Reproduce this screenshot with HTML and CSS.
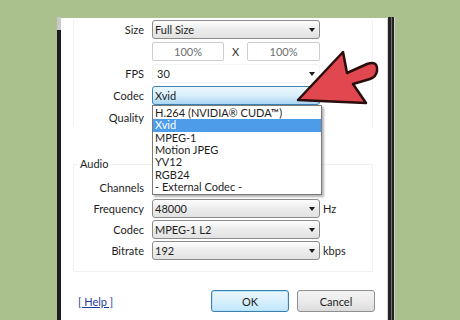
FILE: index.html
```html
<!DOCTYPE html>
<html>
<head>
  <meta charset="utf-8" />
  <title>Export Settings</title>
  <link rel="stylesheet" href="styles.css">
</head>
<body>

  <div class="frame">
    <div class="edge-left"></div>

    <div class="dialog">
      <!-- Video settings -->
      <div class="group video">
        <div class="row">
          <span class="lbl">Size</span>
          <div class="ctl select"><span>Full Size</span><i class="caret"></i></div>
        </div>
        <div class="row">
          <span class="lbl"></span>
          <div class="ctl pct">
            <span class="pct-box">100%</span>
            <span class="times">X</span>
            <span class="pct-box">100%</span>
          </div>
        </div>
        <div class="row">
          <span class="lbl">FPS</span>
          <div class="ctl select combo"><span>30</span><i class="caret"></i></div>
        </div>
        <div class="row codec-row">
          <span class="lbl">Codec</span>
          <div class="ctl select open"><span>Xvid</span><i class="caret"></i>
            <ul class="dropdown">
              <li>H.264 (NVIDIA® CUDA™)</li>
              <li class="active">Xvid</li>
              <li>MPEG-1</li>
              <li>Motion JPEG</li>
              <li>YV12</li>
              <li>RGB24</li>
              <li>- External Codec -</li>
            </ul>
          </div>
        </div>
        <div class="row">
          <span class="lbl">Quality</span>
        </div>
      </div>

      <!-- Audio settings -->
      <fieldset class="group audio">
        <legend>Audio</legend>
        <div class="row">
          <span class="lbl">Channels</span>
        </div>
        <div class="row">
          <span class="lbl">Frequency</span>
          <div class="ctl select"><span>48000</span><i class="caret"></i></div>
          <span class="unit">Hz</span>
        </div>
        <div class="row">
          <span class="lbl">Codec</span>
          <div class="ctl select"><span>MPEG-1 L2</span><i class="caret"></i></div>
        </div>
        <div class="row">
          <span class="lbl">Bitrate</span>
          <div class="ctl select"><span>192</span><i class="caret"></i></div>
          <span class="unit">kbps</span>
        </div>
      </fieldset>

      <div class="footer">
        <a class="help" href="#">[ Help ]</a>
        <div class="buttons">
          <button class="btn default">OK</button>
          <button class="btn">Cancel</button>
        </div>
      </div>
    </div>

    <div class="edge-right"></div>
  </div>

  <!-- red pointer drawn over the dialog -->
  <svg class="pointer" width="460" height="320" viewBox="0 0 460 320">
    <path d="M298,100 L343,52 L347,73 L367,64 Q378,60 377,71 Q376,77 370,79 L353,84 L366,103 Z"
          fill="#e1474e" stroke="#2a0d0d" stroke-width="2.5" stroke-linejoin="round" />
  </svg>

</body>
</html>
```

FILE: styles.css
```css
/* --- General Setup --- */
:root {
  --bg-color: #aac18e;
  --text-color: #1e1e1e;
  --box-border: #8b8b8b;
  --group-line: #f1f1f1;
  --focus-border: #3c7fb1;
  --highlight: #4c9ce9;
}
*, *::before, *::after {
  box-sizing: border-box;
}
body {
  margin: 0;
  width: 460px;
  height: 320px;
  overflow: hidden;
  background-color: var(--bg-color);
  font-family: Lato, "Open Sans", sans-serif;
  font-size: 11px;
  color: var(--text-color);
}

/* --- Window frame --- */
.frame {
  display: flex;
  margin: 17px 0 0 57px;
  width: 338px;
  height: 303px;
}
.edge-left {
  width: 4px;
  background: linear-gradient(#c9c9c9 0 13px, #1d1d1d 13px);
}
.edge-right {
  width: 8px;
  background: linear-gradient(to right, #d2d2d2 0 1px, #232323 1px 4px, #6f6f6f 4px 5px, #232323 5px 7px, #cfcfcf 7px 8px);
}
.dialog {
  flex: 1;
  margin-top: 1px;
  background: #fff;
  padding: 2px 12px 0;
}

/* --- Groups & rows --- */
.group {
  width: 300px;
  border-left: 1px solid var(--group-line);
  border-right: 1px solid var(--group-line);
  display: flex;
  flex-direction: column;
}
.video {
  gap: 3px;
}
.audio {
  margin: 30px 0 0;
  padding: 7px 0 11px;
  border: 1px solid var(--group-line);
  gap: 2px;
  min-inline-size: 0;
}
.audio legend {
  margin-left: 4px;
  padding: 0 2px;
  line-height: 14px;
}
.row {
  display: flex;
  align-items: center;
  height: 19px;
}
.lbl {
  width: 78px;
  padding-right: 8px;
  text-align: right;
}
.ctl {
  width: 168px;
  height: 19px;
}
.unit {
  padding-left: 3px;
}

/* --- Combo boxes --- */
.select {
  display: flex;
  align-items: center;
  justify-content: space-between;
  padding: 0 4px 0 2px;
  border: 1px solid var(--box-border);
  border-radius: 3px;
  background: linear-gradient(#fdfdfd, #ececec 50%, #e2e2e2);
}
.select.combo {
  border-color: #f4f4f4;
  background: #fff;
  padding-left: 4px;
}
.select.open {
  position: relative;
  border-color: var(--focus-border);
  background: linear-gradient(#eaf6fd, #d9f0fc 50%, #a9d5f2);
}
.caret {
  width: 0;
  height: 0;
  border-left: 3.5px solid transparent;
  border-right: 3.5px solid transparent;
  border-top: 4px solid #1a1a1a;
}

/* --- Percent boxes --- */
.pct {
  display: flex;
  align-items: center;
}
.pct-box {
  width: 72px;
  height: 19px;
  line-height: 17px;
  border: 1px solid #cdcdcd;
  border-radius: 2px;
  text-align: center;
  color: #6e6e6e;
}
.pct-box:last-child {
  width: 73px;
}
.times {
  flex: 1;
  text-align: center;
  color: #333;
}

/* --- Opened drop down list --- */
.dropdown {
  position: absolute;
  top: 18px;
  left: -1px;
  width: 170px;
  margin: 0;
  padding: 1px 0;
  list-style: none;
  background: #fff;
  border: 1px solid #7a7a7a;
  box-shadow: 2px 2px 2px rgba(0, 0, 0, 0.3);
  z-index: 2;
}
.dropdown li {
  height: 12.33px;
  line-height: 12.33px;
  padding: 0 2px;
  white-space: nowrap;
}
.dropdown li.active {
  background: var(--highlight);
  color: #fff;
}

/* --- Footer --- */
.footer {
  display: flex;
  align-items: center;
  margin-top: 18px;
  width: 302px;
}
.help {
  margin-left: 5px;
  color: #1b3c9c;
  text-decoration: underline;
}
.buttons {
  margin-left: auto;
  display: flex;
  gap: 8px;
}
.btn {
  width: 78px;
  height: 22px;
  padding: 0;
  font: inherit;
  color: var(--text-color);
  border: 1px solid #8e8f8f;
  border-radius: 3px;
  background: linear-gradient(#f3f3f3, #ebebeb 50%, #dbdbdb);
}
.btn.default {
  border-color: var(--focus-border);
  box-shadow: inset 0 0 0 1px #b8e3fb;
  background: linear-gradient(#eaf6fd, #d9f0fc 50%, #bee6fd);
}

/* --- Pointer overlay --- */
.pointer {
  position: absolute;
  left: 0;
  top: 0;
  pointer-events: none;
  z-index: 5;
}
```
